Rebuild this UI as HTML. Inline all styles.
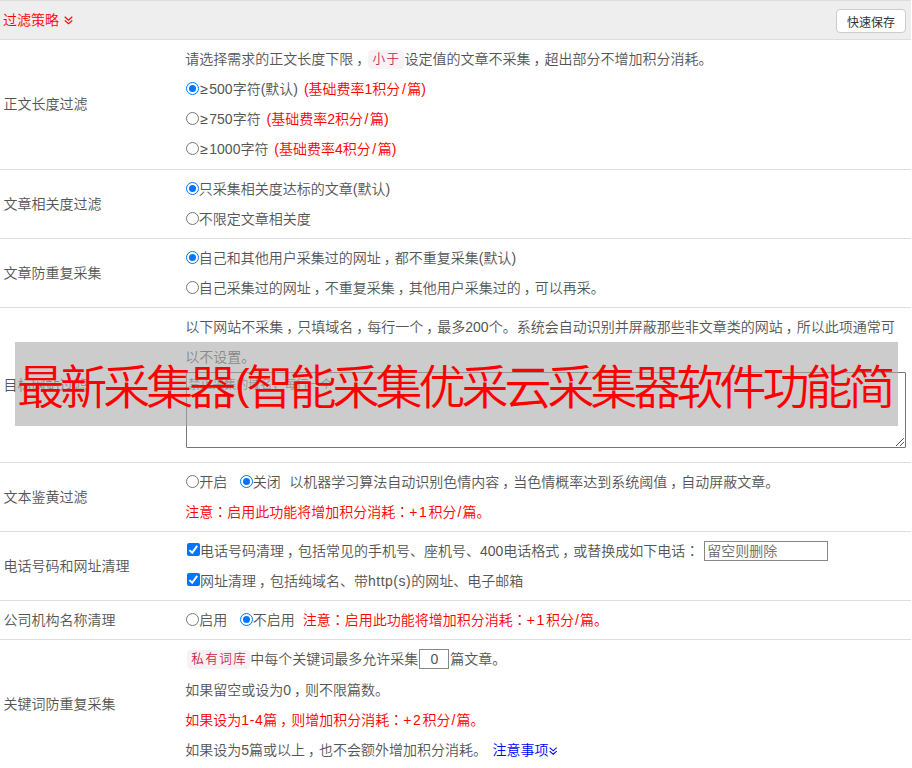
<!DOCTYPE html>
<html lang="zh-CN">
<head>
<meta charset="utf-8">
<title>过滤策略</title>
<style>
html,body{margin:0;padding:0;background:#fff;}
body{width:912px;height:768px;overflow:hidden;position:relative;font-family:"Liberation Sans","Noto Sans CJK SC",sans-serif;font-size:14px;color:#555;font-weight:350;}
.hdr{position:absolute;left:0;top:0;width:911px;height:38px;background:#eee;border-top:1px solid #ddd;border-bottom:1px solid #ddd;}
.hdr .t{position:absolute;left:3px;top:9px;color:#f00;font-size:14px;line-height:20px;white-space:nowrap;}
.btn{position:absolute;left:836px;top:8px;width:68px;height:22px;border:1px solid #ccc;border-radius:4px;background:#fff;color:#333;font-size:12px;line-height:24px;padding-top:1px;height:21px;text-align:center;font-weight:400;}
.row{position:absolute;left:0;width:911px;border-bottom:1px solid #ddd;}
.lab{position:absolute;left:3.4px;font-size:14px;line-height:20px;color:#555;white-space:nowrap;}
.ln{position:absolute;left:185.3px;word-spacing:2px;font-size:14px;line-height:20px;white-space:nowrap;color:#555;}
.ln>*{vertical-align:top;}
.red{color:#f00;}
.blue{color:#00f;}
.c{font-family:"Liberation Sans","Noto Sans CJK JP",sans-serif;}
.code{display:inline-block;color:#c7254e;background:#f9f2f4;border-radius:4px;height:19px;line-height:19px;margin-top:1px;padding:0 3px 0 4.5px;font-size:12.6px;letter-spacing:1.4px;}
.rad{display:inline-block;width:13px;height:13px;border:1px solid #767676;border-radius:50%;margin-top:3px;margin-left:0.5px;box-sizing:border-box;background:#fff;position:relative;}
.rad.on{border-color:#0075ff;}
.rad.on:after{content:"";position:absolute;left:2px;top:2px;width:7px;height:7px;border-radius:50%;background:#0075ff;}
.chk{display:inline-block;width:13px;height:13px;border-radius:2px;background:#0075ff;margin-top:2px;margin-left:1.7px;position:relative;}
.chk svg{position:absolute;left:0;top:0;}
.inp{display:inline-block;box-sizing:border-box;border:1px solid #767676;background:#fff;}
.cm{position:relative;left:3px;}
.ge{display:inline-block;width:10.5px;text-align:center;}
.g{display:inline-block;}
.ov{position:absolute;left:15px;top:342px;width:883px;height:83.6px;background:rgba(170,170,170,0.6);}
.ovt{position:absolute;left:17.25px;top:342px;height:84px;font-size:47px;letter-spacing:-4px;line-height:92px;color:#f00;white-space:nowrap;font-weight:350;}
.ovt i{font-style:normal;display:inline-block;width:14.25px;font-size:43px;letter-spacing:0;text-align:right;margin-left:3px;margin-right:-3px;vertical-align:top;line-height:84px;}
</style>
</head>
<body>
<div class="hdr"><span class="t">过滤策略<svg width="9" height="9" viewBox="0 0 10 10" style="position:absolute;left:60.7px;top:6px"><path d="M0.8 0.8 L5 4.6 L9.2 0.8 M0.8 4.8 L5 8.6 L9.2 4.8" fill="none" stroke="#f00" stroke-width="1.25"/></svg></span><div class="btn">快速保存</div></div>

<div class="row" style="top:40px;height:129px;">
  <div class="lab" style="top:54px;">正文长度过滤</div>
  <div class="ln" style="top:9px;">请选择需求的正文长度下限<span class="cm">，</span><span class="code" style="margin:1px 0.8px 0 0.8px">小于</span>设定值的文章不采集<span class="cm">，</span>超出部分不增加积分消耗。</div>
  <div class="ln" style="top:39px;"><span class="rad on"></span><span class="ge">≥</span>500字符(默认) <span class="red">(基础费率1积分<span class="g" style="width:7px;text-align:center">/</span>篇)</span></div>
  <div class="ln" style="top:69px;"><span class="rad"></span><span class="ge">≥</span>750字符 <span class="red">(基础费率2积分<span class="g" style="width:7px;text-align:center">/</span>篇)</span></div>
  <div class="ln" style="top:99px;"><span class="rad"></span><span class="ge">≥</span>1000字符 <span class="red">(基础费率4积分<span class="g" style="width:7px;text-align:center">/</span>篇)</span></div>
</div>

<div class="row" style="top:170px;height:68px;">
  <div class="lab" style="top:24px;">文章相关度过滤</div>
  <div class="ln" style="top:9px;"><span class="rad on"></span>只采集相关度达标的文章(默认)</div>
  <div class="ln" style="top:39px;"><span class="rad"></span>不限定文章相关度</div>
</div>

<div class="row" style="top:239px;height:68px;">
  <div class="lab" style="top:24px;">文章防重复采集</div>
  <div class="ln" style="top:9px;"><span class="rad on"></span>自己和其他用户采集过的网址<span class="cm">，</span>都不重复采集(默认)</div>
  <div class="ln" style="top:39px;"><span class="rad"></span>自己采集过的网址<span class="cm">，</span>不重复采集<span class="cm">，</span>其他用户采集过的<span class="cm">，</span>可以再采。</div>
</div>

<div class="row" style="top:308px;height:154px;">
  <div class="lab" style="top:67px;">目标网站过滤</div>
  <div class="ln" style="top:9px;">以下网站不采集<span class="cm">，</span>只填域名<span class="cm">，</span>每行一个<span class="cm">，</span>最多200个。系统会自动识别并屏蔽那些非文章类的网站<span class="cm">，</span>所以此项通常可</div>
  <div class="ln" style="top:39px;">以不设置。</div>
  <div class="inp" style="position:absolute;left:186px;top:64px;width:720px;height:76px;border-radius:1px;"><span style="position:absolute;left:1.2px;top:3.5px;font-size:12px;line-height:16px;color:#757575;white-space:nowrap;font-weight:400;">禁止采集的域名，每行一个</span>
  <svg width="10" height="10" style="position:absolute;right:0px;bottom:0px" viewBox="0 0 10 10"><path d="M9 1 L1 9 M9 5 L5 9" stroke="#555" stroke-width="1" fill="none"/></svg></div>
</div>

<div class="row" style="top:463px;height:68px;">
  <div class="lab" style="top:24px;">文本鉴黄过滤</div>
  <div class="ln" style="top:9px;"><span class="rad"></span><span class="g" style="width:40px;margin-left:0.5px">开启</span><span class="rad on"></span><span class="g" style="width:36.5px;">关闭</span>以机器学习算法自动识别色情内容<span class="cm">，</span>当色情概率达到系统阈值<span class="cm">，</span>自动屏蔽文章。</div>
  <div class="ln red" style="top:39px;">注意<span class="c" lang="ja">：</span>启用此功能将增加积分消耗<span class="c" lang="ja">：</span><span style="letter-spacing:1.6px">+1</span>积分<span class="g" style="width:6px;text-align:center">/</span>篇。</div>
</div>

<div class="row" style="top:532px;height:68px;">
  <div class="lab" style="top:24px;">电话号码和网址清理</div>
  <div class="ln" style="top:9px;"><span class="chk"><svg width="13" height="13" viewBox="0 0 13 13"><path d="M2.4 7.1 L5.2 9.8 L10.2 2.9" fill="none" stroke="#fff" stroke-width="2" stroke-linejoin="miter"/></svg></span>电话号码清理<span class="cm">，</span>包括常见的手机号、座机号、400电话格式<span class="cm">，</span>或替换成如下电话<span class="c" lang="ja">：</span><span class="inp" style="width:124px;height:20px;position:relative;margin-left:4.7px;border-color:#888;"><span style="position:absolute;left:2.2px;top:0;font-size:14px;color:#757575;line-height:18px;font-weight:400;">留空则删除</span></span></div>
  <div class="ln" style="top:39px;"><span class="chk"><svg width="13" height="13" viewBox="0 0 13 13"><path d="M2.4 7.1 L5.2 9.8 L10.2 2.9" fill="none" stroke="#fff" stroke-width="2" stroke-linejoin="miter"/></svg></span>网址清理<span class="cm">，</span>包括纯域名、带<span style="letter-spacing:0.5px">http(s)</span>的网址、电子邮箱</div>
</div>

<div class="row" style="top:601px;height:38px;">
  <div class="lab" style="top:9px;">公司机构名称清理</div>
  <div class="ln" style="top:9px;"><span class="rad"></span><span class="g" style="width:40px;margin-left:0.5px">启用</span><span class="rad on"></span><span class="g" style="width:50px;">不启用</span><span class="red">注意<span class="c" lang="ja">：</span>启用此功能将增加积分消耗<span class="c" lang="ja">：</span><span style="letter-spacing:1.6px">+1</span>积分<span class="g" style="width:6px;text-align:center">/</span>篇。</span></div>
</div>

<div class="row" style="top:640px;height:128px;border-bottom:none;">
  <div class="lab" style="top:54px;">关键词防重复采集</div>
  <div class="ln" style="top:9px;"><span class="code" style="margin-left:1.5px">私有词库</span>中每个关键词最多允许采集<span class="inp" style="width:30px;height:20px;text-align:center;line-height:18px;color:#555;margin:0 1px;border-color:#888;">0</span>篇文章。</div>
  <div class="ln" style="top:40px;">如果留空或设为0<span class="cm">，</span>则不限篇数。</div>
  <div class="ln red" style="top:70px;">如果设为<span style="letter-spacing:0.6px">1-4</span>篇<span class="cm">，</span>则增加积分消耗<span class="c" lang="ja">：</span><span style="letter-spacing:1.6px">+2</span>积分<span class="g" style="width:6px;text-align:center">/</span>篇。</div>
  <div class="ln" style="top:100px;">如果设为5篇或以上<span class="cm">，</span>也不会额外增加积分消耗。 <span class="blue" style="margin-left:-0.4px">注意事项<svg width="8.4" height="8.4" viewBox="0 0 10 10" style="margin-top:6px;margin-left:0.3px"><path d="M0.8 0.8 L5 4.6 L9.2 0.8 M0.8 4.8 L5 8.6 L9.2 4.8" fill="none" stroke="#00f" stroke-width="1.25"/></svg></span></div>
</div>

<div class="ov"></div>
<div class="ovt">最新采集器<i>(</i>智能采集优采云采集器软件功能简</div>
</body>
</html>
